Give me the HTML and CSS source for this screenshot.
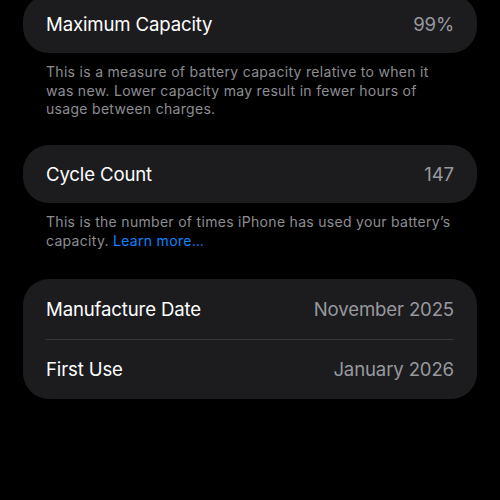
FILE: index.html
```html
<!DOCTYPE html>
<html lang="en">
<head>
    <meta charset="UTF-8">
    <meta name="viewport" content="width=device-width, initial-scale=1.0">
    <title>Battery Health</title>
    <link rel="stylesheet" href="styles.css">
</head>
<body>
    <div class="settings-list">
        <div class="group">
            <div class="row">
                <span class="label">Maximum Capacity</span>
                <span class="value">99%</span>
            </div>
        </div>
        <p class="footer">This is a measure of battery capacity relative to when it was new. Lower capacity may result in fewer hours of usage between charges.</p>

        <div class="group">
            <div class="row">
                <span class="label">Cycle Count</span>
                <span class="value">147</span>
            </div>
        </div>
        <p class="footer footer-last">This is the number of times iPhone has used your battery’s capacity. <a href="#" class="link">Learn more…</a></p>

        <div class="group">
            <div class="row row-tall">
                <span class="label">Manufacture Date</span>
                <span class="value">November 2025</span>
            </div>
            <div class="row row-tall">
                <span class="label">First Use</span>
                <span class="value">January 2026</span>
            </div>
        </div>
    </div>
</body>
</html>
```

FILE: styles.css
```css
body {
    margin: 0;
    background-color: #000;
    font-family: Inter, "Noto Sans", sans-serif;
    color: #fff;
    -webkit-font-smoothing: antialiased;
}
.settings-list {
    margin-top: -5px;
    padding: 0 23px;
}
.group {
    background-color: #1c1c1e;
    border-radius: 26px;
    overflow: hidden;
}
.row {
    display: flex;
    justify-content: space-between;
    align-items: center;
    height: 58px;
    margin: 0 23px;
    font-size: 18.6px;
    letter-spacing: -0.15px;
}
.row-tall {
    height: 59.5px;
}
.row + .row {
    border-top: 1px solid #38383a;
}
.label {
    color: #fff;
}
.value {
    color: #98989f;
}
.footer {
    margin: 0;
    padding: 10px 23px 26.5px 23px;
    font-size: 14px;
    line-height: 18.5px;
    letter-spacing: 0.3px;
    color: #8d8d93;
}
.footer-last {
    padding-bottom: 29px;
}
.link {
    color: #0a84ff;
    text-decoration: none;
}
```
